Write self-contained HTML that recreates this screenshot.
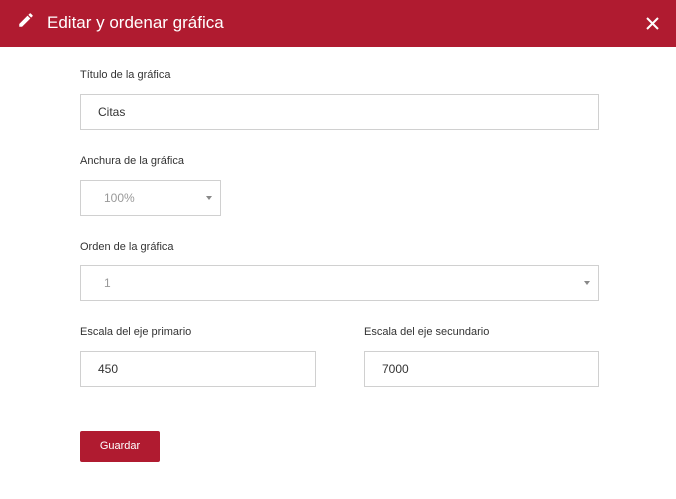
<!DOCTYPE html>
<html><head><meta charset="utf-8"><style>
*{box-sizing:border-box;margin:0;padding:0}
body{width:676px;height:499px;background:#fff;font-family:"Liberation Sans",sans-serif;position:relative;overflow:hidden}
.hdr{position:absolute;left:0;top:0;width:676px;height:47px;background:#b01b30;color:#fff}
.hdr .t{position:absolute;left:47px;top:13px;font-size:17px}
.lbl{position:absolute;left:80px;font-size:11px;color:#333}
.box{position:absolute;border:1px solid #d0d0d0;height:36px;font-size:12px;color:#333;padding-left:17px;line-height:34px}
.sel{color:#999;padding-left:23px}
.arr{position:absolute;right:8px;top:15px;width:0;height:0;border-left:3px solid transparent;border-right:3px solid transparent;border-top:4px solid #888}
.btn{position:absolute;left:80px;top:431px;width:80px;height:31px;background:#b01b30;color:#fff;font-size:11px;text-align:center;line-height:30px;border-radius:2px}
</style></head><body>
<div class="hdr">
<svg style="position:absolute;left:17px;top:11px" width="18" height="18" viewBox="0 0 24 24"><path fill="#fff" d="M3 17.25V21h3.75L17.81 9.94l-3.75-3.75L3 17.25zM20.71 7.04a1 1 0 000-1.41l-2.34-2.34a1 1 0 00-1.41 0l-1.83 1.83 3.75 3.75 1.83-1.83z"/></svg>
<div class="t">Editar y ordenar gráfica</div>
<svg style="position:absolute;left:646px;top:17px" width="13" height="13" viewBox="0 0 13 13"><path d="M1 1L12 12M12 1L1 12" stroke="#fff" stroke-width="2"/></svg>
</div>
<div class="lbl" style="top:69px">Título de la gráfica</div>
<div class="box" style="left:80px;top:94px;width:519px">Citas</div>
<div class="lbl" style="top:155px">Anchura de la gráfica</div>
<div class="box sel" style="left:80px;top:180px;width:141px">100%<span class="arr"></span></div>
<div class="lbl" style="top:241px">Orden de la gráfica</div>
<div class="box sel" style="left:80px;top:265px;width:519px">1<span class="arr"></span></div>
<div class="lbl" style="top:326px">Escala del eje primario</div>
<div class="lbl" style="top:326px;left:364px">Escala del eje secundario</div>
<div class="box" style="left:80px;top:351px;width:236px">450</div>
<div class="box" style="left:364px;top:351px;width:235px">7000</div>
<div class="btn">Guardar</div>
</body></html>
